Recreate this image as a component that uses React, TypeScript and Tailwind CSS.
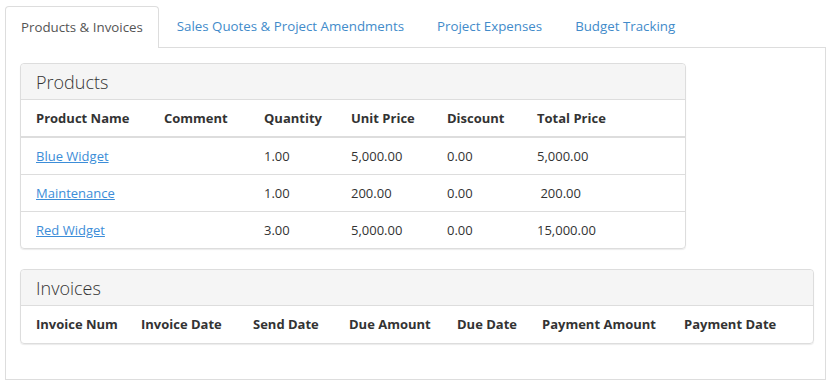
import React from "react";

const font = { fontFamily: '"Open Sans", "Noto Sans", sans-serif' };

const products = [
  ["Blue Widget", "", "1.00", "5,000.00", "0.00", "5,000.00"],
  ["Maintenance", "", "1.00", "200.00", "0.00", "\u00a0200.00"],
  ["Red Widget", "", "3.00", "5,000.00", "0.00", "15,000.00"],
];

const pCols = "grid grid-cols-[128px_100px_87px_96px_90px_1fr]";
const iCols = "grid grid-cols-[105px_112px_96px_108px_85px_142px_1fr]";

export default function App() {
  return (
    <div className="w-[831px] h-[388px] bg-white text-[#333] text-[13px]" style={font}>
      <div className="flex pl-[5px] pt-[6px] text-[13.3px]">
        <div className="h-[42px] px-[15px] pt-px flex items-center border border-b-0 border-[#ddd] rounded-t-[4px] bg-white text-[#555] relative z-10 -mb-px">
          Products &amp; Invoices
        </div>
        <div className="h-[41px] pl-[18px] pr-[15px] pt-px flex items-center text-[#428bca]">Sales Quotes &amp; Project Amendments</div>
        <div className="h-[41px] pl-[18px] pr-[15px] pt-px flex items-center text-[#428bca]">Project Expenses</div>
        <div className="h-[41px] pl-[18px] pr-[15px] pt-px flex items-center text-[#428bca]">Budget Tracking</div>
      </div>
      <div className="mx-[5px] h-[333px] border border-[#ddd] pl-[14px] pr-[15px] py-[15px]">
        <div className="w-[666px] border border-[#ddd] rounded-[4px] shadow-[0_1px_1px_rgba(0,0,0,0.08)] mb-[20px]">
          <div className="h-[36px] bg-[#f5f5f5] border-b border-[#ddd] rounded-t-[4px] px-[15px] pt-px flex items-center text-[18px] text-[#333] font-light">
            Products
          </div>
          <div className={`${pCols} h-[38px] pt-px items-center border-b-2 border-[#ddd] font-bold`}>
            {["Product Name", "Comment", "Quantity", "Unit Price", "Discount", "Total Price"].map((h) => (
              <div key={h} className="pl-[15px]">{h}</div>
            ))}
          </div>
          {products.map((r, i) => (
            <div key={i} className={`${pCols} ${i < products.length - 1 ? "h-[37px] border-b border-[#ddd]" : "h-[36px]"} pt-px items-center`}>
              <div className="pl-[15px]">
                <span className="text-[#3c8dd8] underline">{r[0]}</span>
              </div>
              {r.slice(1).map((c, j) => (
                <div key={j} className="pl-[15px] whitespace-pre">{c}</div>
              ))}
            </div>
          ))}
        </div>
        <div className="w-[794px] border border-[#ddd] rounded-[4px] shadow-[0_1px_1px_rgba(0,0,0,0.08)]">
          <div className="h-[36px] bg-[#f5f5f5] border-b border-[#ddd] rounded-t-[4px] px-[15px] pt-px flex items-center text-[18px] text-[#333] font-light">
            Invoices
          </div>
          <div className={`${iCols} h-[37px] pt-px items-center font-bold`}>
            {["Invoice Num", "Invoice Date", "Send Date", "Due Amount", "Due Date", "Payment Amount", "Payment Date"].map((h) => (
              <div key={h} className="pl-[15px] whitespace-nowrap">{h}</div>
            ))}
          </div>
        </div>
      </div>
    </div>
  );
}
